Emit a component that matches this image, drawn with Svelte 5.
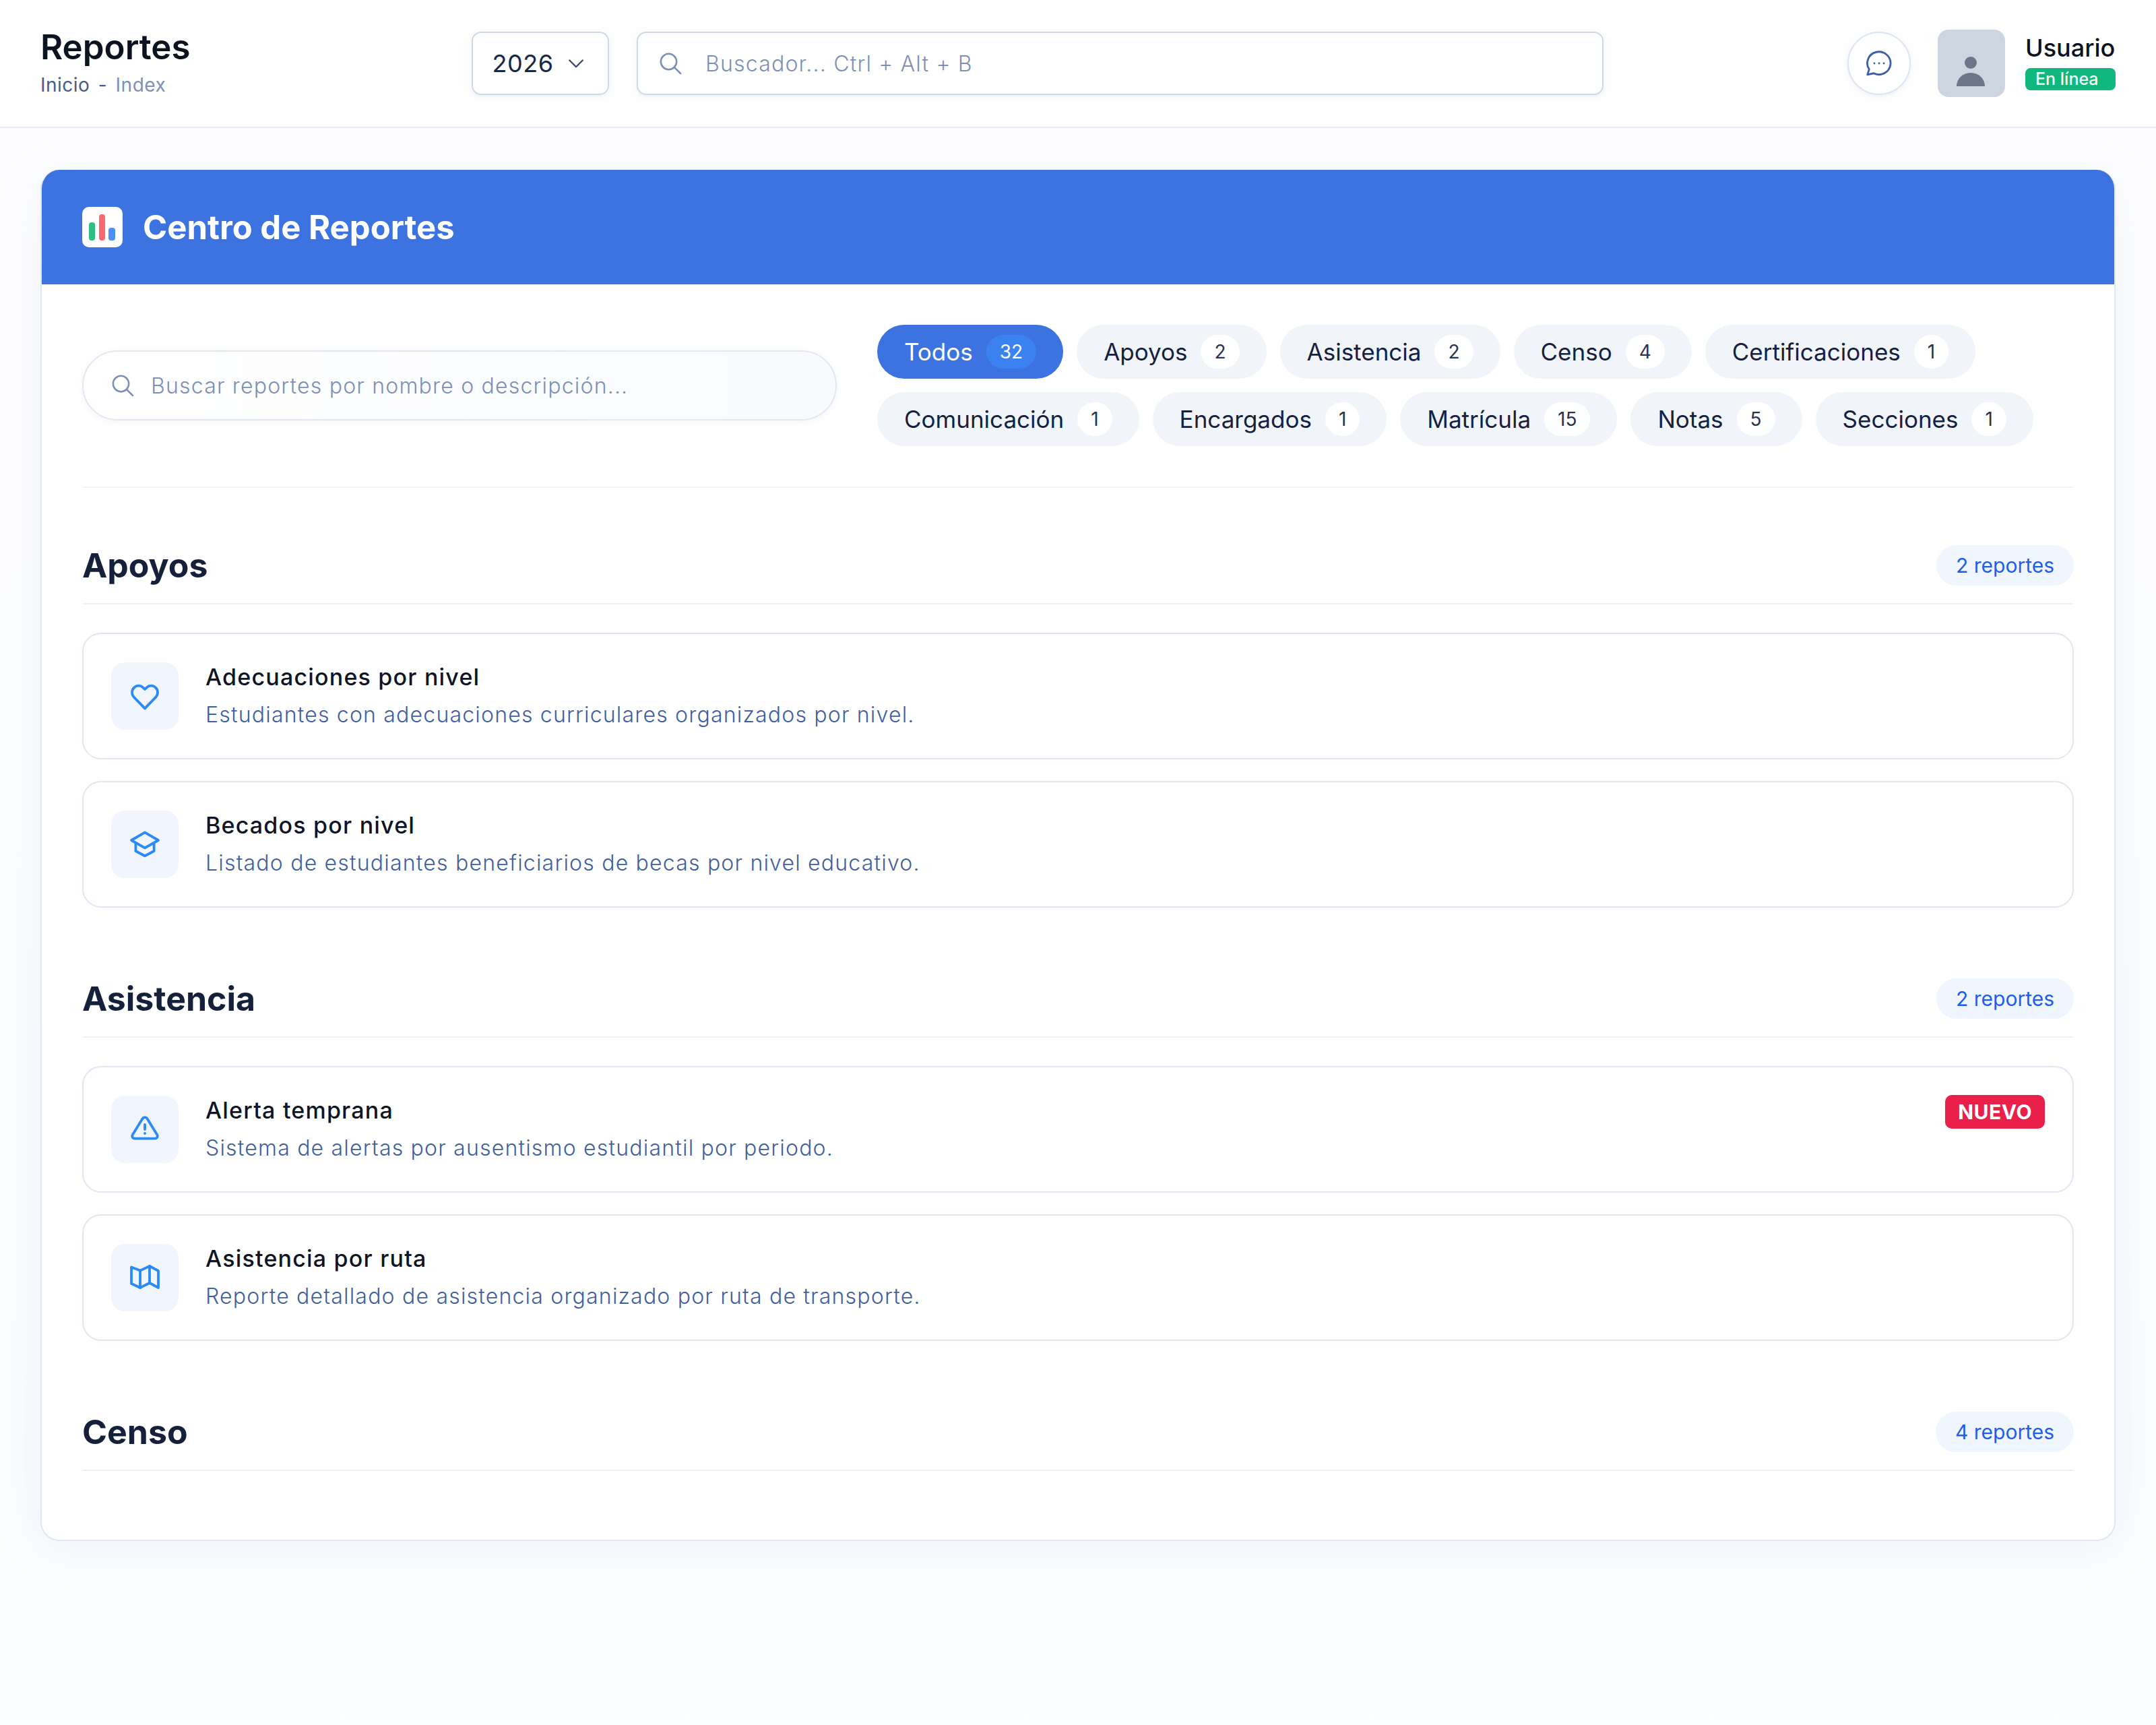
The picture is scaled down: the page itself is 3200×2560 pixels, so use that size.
<script lang="ts">
  // Centro de Reportes page. Sizes are in real px of the 3200 wide screen.
  const filters = [
    { name: "Todos", count: 32, active: true },
    { name: "Apoyos", count: 2 },
    { name: "Asistencia", count: 2 },
    { name: "Censo", count: 4 },
    { name: "Certificaciones", count: 1 },
    { name: "Comunicación", count: 1 },
    { name: "Encargados", count: 1 },
    { name: "Matrícula", count: 15 },
    { name: "Notas", count: 5 },
    { name: "Secciones", count: 1 },
  ];

  const sections = [
    {
      title: "Apoyos",
      count: 2,
      items: [
        { icon: "heart", name: "Adecuaciones por nivel", desc: "Estudiantes con adecuaciones curriculares organizados por nivel." },
        { icon: "cap", name: "Becados por nivel", desc: "Listado de estudiantes beneficiarios de becas por nivel educativo." },
      ],
    },
    {
      title: "Asistencia",
      count: 2,
      items: [
        { icon: "alert", name: "Alerta temprana", desc: "Sistema de alertas por ausentismo estudiantil por periodo.", isNew: true },
        { icon: "map", name: "Asistencia por ruta", desc: "Reporte detallado de asistencia organizado por ruta de transporte." },
      ],
    },
    { title: "Censo", count: 4, items: [] },
  ];
</script>

<div class="page">
  <header class="topbar">
    <div class="crumbs">
      <h1>Reportes</h1>
      <div class="trail"><span>Inicio</span> <span class="sep">-</span> <span class="leaf">Index</span></div>
    </div>
    <button class="year" type="button">
      2026
      <svg viewBox="0 0 24 24" width="36" height="36" fill="none" stroke="currentColor" stroke-width="1.6" stroke-linecap="round" stroke-linejoin="round"><path d="M5.5 9l6.5 6.5L18.500 9" /></svg>
    </button>
    <div class="global-search">
      <svg viewBox="0 0 24 24" width="40" height="40" fill="none" stroke="currentColor" stroke-width="1.5" stroke-linecap="round"><circle cx="10.500" cy="10.500" r="7" /><path d="M15.800 15.800L21 21" /></svg>
      <span>Buscador... Ctrl + Alt + B</span>
    </div>
    <button class="chat" type="button" aria-label="mensajes">
      <svg viewBox="0 0 24 24" width="46" height="46" fill="none" stroke="currentColor" stroke-width="1.500" stroke-linecap="round" stroke-linejoin="round">
        <path d="M3 20.800l1.300-4.200a9 8.800 0 1 1 3.500 3.100z" />
        <path d="M8.300 12h.01M12 12h.01M15.700 12h.01" />
      </svg>
    </button>
    <div class="avatar">
      <svg viewBox="0 0 100 100" width="100" height="100"><ellipse cx="49" cy="49" rx="9" ry="9" /><path d="M28 84a21 20 0 0 1 42 0z" /></svg>
    </div>
    <div class="user">
      <div class="user-name">Usuario</div>
      <div class="online">En línea</div>
    </div>
  </header>

  <main class="content">
    <section class="panel">
      <div class="panel-head">
        <span class="logo">
          <svg viewBox="0 0 60 60" width="60" height="60">
            <rect x="10" y="23" width="9" height="27" rx="4" fill="#2fbf82" />
            <rect x="25" y="11" width="9" height="39" rx="4" fill="#f76b6e" />
            <rect x="39" y="31" width="10" height="19" rx="4" fill="#4b90f2" />
          </svg>
        </span>
        <h2>Centro de Reportes</h2>
      </div>

      <div class="panel-body">
        <div class="toolbar">
          <div class="report-search">
            <svg viewBox="0 0 24 24" width="40" height="40" fill="none" stroke="currentColor" stroke-width="1.500" stroke-linecap="round"><circle cx="10.500" cy="10.500" r="7" /><path d="M15.800 15.800L21 21" /></svg>
            <span>Buscar reportes por nombre o descripción...</span>
          </div>
          <div class="chips">
            {#each filters as f}
              <button class="chip" class:active={f.active} type="button">
                {f.name}
                <span class="chip-count">{f.count}</span>
              </button>
            {/each}
          </div>
        </div>

        {#each sections as s}
          <div class="group">
            <div class="group-head">
              <h3>{s.title}</h3>
              <span class="group-count">{s.count} reportes</span>
            </div>
            <div class="items">
              {#each s.items as it}
                <article class="item">
                  <span class="item-icon">
                    <svg viewBox="0 0 24 24" width="48" height="48" fill="none" stroke="currentColor" stroke-width="1.900" stroke-linecap="round" stroke-linejoin="round">
                      {#if it.icon === "heart"}
                        <path d="M12 21.200L3.900 12.800a5.100 5.100 0 0 1 0-7 4.800 4.800 0 0 1 6.900 0L12 7l1.200-1.200a4.800 4.800 0 0 1 6.900 0 5.100 5.100 0 0 1 0 7z" />
                      {:else if it.icon === "cap"}
                        <path d="M12 3.200l10 5.800-10 5.700L2 9z" />
                        <path d="M5.200 11.200v5.800l6.800 3.600 6.800-3.600v-5.800" />
                      {:else if it.icon === "alert"}
                        <path d="M10.300 4L2.900 16a1.800 1.800 0 0 0 1.500 2.800h15.200a1.800 1.800 0 0 0 1.500-2.800L13.700 4a2 2 0 0 0-3.400 0z" />
                        <path d="M12 8.500V12M12 15h.01" />
                      {:else}
                        <path d="M2 4.200l6.500 2.600 7-3.300L22 7v12.500L15.500 16l-7 3.500L2 16.500z" />
                        <path d="M8.500 6.800v12.700M15.500 3.500V16" />
                      {/if}
                    </svg>
                  </span>
                  <div class="item-text">
                    <div class="item-name">{it.name}</div>
                    <div class="item-desc">{it.desc}</div>
                  </div>
                  {#if it.isNew}<span class="new">NUEVO</span>{/if}
                </article>
              {/each}
            </div>
          </div>
        {/each}
      </div>
    </section>
  </main>
</div>

<style>
  :global(body) {
    margin: 0;
    background: #fcfdfe;
  }
  .page {
    min-height: 2560px;
    font-family: Inter, "Liberation Sans", sans-serif;
    color: #0f172a;
    background: linear-gradient(180deg, #fdfdfe 0, #fafcfe 85%, #fdfeff 100%);
  }
  h1,
  h2,
  h3 {
    margin: 0;
  }
  button {
    font-family: inherit;
    cursor: pointer;
  }

  .topbar {
    display: flex;
    align-items: center;
    height: 188px;
    padding: 0 60px;
    border-bottom: 2px solid #e6ecf5;
    background: #fefefe;
  }
  .crumbs {
    width: 640px;
    flex: none;
    padding-bottom: 4px;
  }
  .crumbs h1 {
    font-size: 51px;
    font-weight: 600;
    line-height: 60px;
    color: #0b1220;
  }
  .trail {
    margin-top: 8px;
    font-size: 28px;
    line-height: 36px;
    letter-spacing: 0.5px;
    color: #475d85;
  }
  .trail .sep {
    margin: 0 4px;
  }
  .trail .leaf {
    color: #7f90b4;
  }
  .year {
    display: flex;
    align-items: center;
    justify-content: center;
    gap: 16px;
    width: 204px;
    height: 94px;
    flex: none;
    padding: 0;
    border: 2px solid #cfd9e8;
    border-radius: 14px;
    background: #fff;
    color: #1a2744;
    font-size: 36px;
    letter-spacing: 0.5px;
    box-shadow: 0 2px 6px rgba(100, 120, 160, 0.1);
  }
  .year svg {
    color: #3a4a6a;
  }
  .global-search {
    display: flex;
    align-items: center;
    gap: 32px;
    width: 1435px;
    height: 94px;
    flex: none;
    box-sizing: border-box;
    margin-left: 41px;
    padding: 0 28px;
    border: 2px solid #cfd9e8;
    border-radius: 14px;
    background: #fff;
    color: #7c90b6;
    font-size: 32px;
    font-weight: 300;
    letter-spacing: 1.2px;
    box-shadow: 0 2px 6px rgba(100, 120, 160, 0.1);
  }
  .chat {
    display: grid;
    place-items: center;
    width: 94px;
    height: 94px;
    flex: none;
    margin-left: auto;
    padding: 0;
    border: 2px solid #dbe5f5;
    border-radius: 50%;
    background: #fff;
    color: #3f60a8;
    box-shadow: 0 2px 6px rgba(100, 120, 160, 0.1);
  }
  .avatar {
    width: 100px;
    height: 100px;
    flex: none;
    margin-left: 40px;
    border-radius: 16px;
    background: #cdd5e1;
    overflow: hidden;
  }
  .avatar svg {
    display: block;
    fill: #6b7688;
  }
  .user {
    margin-left: 30px;
    padding-bottom: 6px;
    width: 134px;
    flex: none;
  }
  .user-name {
    font-size: 36px;
    font-weight: 500;
    line-height: 44px;
    color: #0b1220;
  }
  .online {
    margin-top: 8px;
    padding: 0 15px;
    height: 33px;
    line-height: 33px;
    border-radius: 8px;
    background: #10b77f;
    color: #f4fff8;
    font-size: 25px;
    font-weight: 500;
  }

  .content {
    padding: 62px 60px 0;
  }
  .panel {
    border: 2px solid #dfe7f2;
    border-top: 0;
    border-radius: 28px;
    background: #fff;
    overflow: hidden;
    box-shadow: 0 12px 70px rgba(140, 165, 210, 0.1);
  }
  .panel-head {
    display: flex;
    align-items: center;
    gap: 30px;
    height: 170px;
    margin: 0 -2px;
    padding: 0 62px;
    background: #3d73e0;
  }
  .logo {
    width: 60px;
    height: 60px;
    flex: none;
    border-radius: 10px;
    background: #fff;
  }
  .logo svg {
    display: block;
  }
  .panel-head h2 {
    font-size: 49px;
    font-weight: 700;
    color: #fff;
  }
  .panel-body {
    padding: 60px 60px 60px;
  }
  .toolbar {
    display: flex;
    align-items: center;
    gap: 60px;
    padding-bottom: 60px;
    border-bottom: 2px solid #f1f4f8;
  }
  .report-search {
    display: flex;
    align-items: center;
    gap: 22px;
    width: 1120px;
    height: 104px;
    flex: none;
    box-sizing: border-box;
    padding: 0 38px;
    border: 2px solid #e2e8f2;
    border-radius: 52px;
    background: linear-gradient(90deg, #fff, #f8fafd);
    color: #7c90b6;
    font-size: 32px;
    font-weight: 300;
    letter-spacing: 1.2px;
    box-shadow: 0 2px 8px rgba(100, 120, 160, 0.08);
  }
  .chips {
    display: flex;
    flex-wrap: wrap;
    gap: 20px;
    flex: 1;
  }
  .chip {
    display: flex;
    align-items: center;
    gap: 20px;
    height: 80px;
    padding: 0 40px;
    border: 0;
    border-radius: 40px;
    background: #f1f5fa;
    color: #15223f;
    font-size: 35px;
  }
  .chip-count {
    padding: 0 20px;
    height: 50px;
    line-height: 50px;
    border-radius: 25px;
    background: #fff;
    font-size: 28px;
    color: #27344f;
  }
  .chip.active {
    background: #3d73e0;
    color: #fff;
  }
  .chip.active .chip-count {
    background: #3b82f0;
    color: #fff;
  }

  .group {
    margin-top: 85px;
  }
  .group + .group {
    margin-top: 105px;
  }
  .group-head {
    display: flex;
    align-items: center;
    justify-content: space-between;
    padding-bottom: 26px;
    border-bottom: 2px solid #eef1f6;
  }
  .group-head h3 {
    font-size: 50px;
    font-weight: 700;
    color: #15203b;
  }
  .group-count {
    height: 60px;
    line-height: 60px;
    padding: 0 29px;
    border-radius: 30px;
    background: #f0f6ff;
    color: #1e5ee8;
    font-size: 30px;
  }
  .items {
    display: flex;
    flex-direction: column;
    gap: 32px;
    margin-top: 42px;
  }
  .item {
    display: flex;
    align-items: center;
    gap: 40px;
    height: 188px;
    box-sizing: border-box;
    padding: 0 41px;
    border: 2px solid #dfe7f3;
    border-radius: 28px;
    background: #fff;
  }
  .item-icon {
    display: grid;
    place-items: center;
    width: 100px;
    height: 100px;
    flex: none;
    border-radius: 20px;
    background: #f1f6fe;
    color: #2a8af6;
  }
  .item-text {
    flex: 1;
  }
  .item-name {
    font-size: 34px;
    font-weight: 500;
    line-height: 50px;
    letter-spacing: 1.2px;
    color: #0e1526;
  }
  .item-desc {
    margin-top: 6px;
    font-size: 32px;
    font-weight: 300;
    line-height: 50px;
    letter-spacing: 1.2px;
    color: #3f5f9f;
  }
  .new {
    align-self: flex-start;
    margin-top: 41px;
    height: 50px;
    line-height: 50px;
    padding: 0 19px;
    border-radius: 10px;
    background: #e8204a;
    color: #fff;
    font-size: 30px;
    font-weight: 700;
    letter-spacing: 0.5px;
  }
</style>
